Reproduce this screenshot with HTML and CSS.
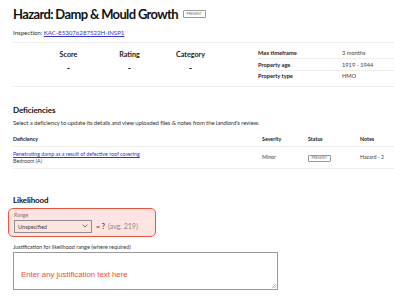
FILE: index.html
```html
<!DOCTYPE html>
<html>
<head>
<meta charset="utf-8">
<link rel="stylesheet" href="styles.css">
</head>
<body>
<div class="page">
  <div class="title-row">
    <h1 class="title">Hazard: Damp &amp; Mould Growth</h1>
    <span class="badge">PRESENT</span>
  </div>
  <div class="inspection">Inspection: <a href="#">KAC-853076287522H-INSP1</a></div>
  <hr class="rule rule-top">
  <div class="summary">
    <div class="scores">
      <div class="score"><div class="score-label">Score</div><div class="score-val">-</div></div>
      <div class="score"><div class="score-label">Rating</div><div class="score-val">-</div></div>
      <div class="score"><div class="score-label">Category</div><div class="score-val">-</div></div>
    </div>
    <table class="props">
      <tr><th>Max timeframe</th><td>3 months</td></tr>
      <tr><th>Property age</th><td>1919 - 1944</td></tr>
      <tr><th>Property type</th><td>HMO</td></tr>
    </table>
  </div>
  <hr class="rule">
  <h2 class="section">Deficiencies</h2>
  <p class="desc">Select a deficiency to update its details and view uploaded files &amp; notes from the landlord's review.</p>
  <table class="defs">
    <thead>
      <tr><th class="c-def">Deficiency</th><th class="c-sev">Severity</th><th class="c-st">Status</th><th class="c-notes">Notes</th></tr>
    </thead>
    <tbody>
      <tr>
        <td class="c-def"><a href="#">Penetrating damp as a result of defective roof covering</a><div class="room">Bedroom (A)</div></td>
        <td class="c-sev">Minor</td>
        <td class="c-st"><span class="badge">PRESENT</span></td>
        <td class="c-notes">Hazard - 2</td>
      </tr>
    </tbody>
  </table>
  <h2 class="section lik">Likelihood</h2>
  <div class="range-box">
    <div class="range-label">Range</div>
    <div class="range-row">
      <div class="select">Unspecified<svg class="chev" width="6" height="4" viewBox="0 0 6 4"><path d="M0.5 0.5 L3 3 L5.5 0.5" fill="none" stroke="#555" stroke-width="0.8"/></svg></div>
      <span class="eq">= ?</span><span class="avg">(avg. 219)</span>
    </div>
  </div>
  <div class="just-label">Justification for likelihood range (where required)</div>
  <div class="textarea"><span class="ph">Enter any justification text here</span><svg class="grip" width="5" height="5" viewBox="0 0 5 5"><path d="M1 5 L5 1 M3 5 L5 3" stroke="#888" stroke-width="0.6"/></svg></div>
</div>
</body>
</html>
```

FILE: styles.css
```css
* { box-sizing: border-box; }
html, body { margin: 0; padding: 0; background: #fff; }
body { font-family: Lato, "Noto Sans", sans-serif; color: #222; }
.page { padding: 5px 0 0 13px; width: 394px; }
.title-row { display: flex; align-items: center; gap: 5px; height: 18px; }
.title { font-size: 13px; font-weight: 700; margin: 0; color: #111; line-height: 18px; letter-spacing: -0.65px; }
.badge { display: inline-block; border: 1px solid #999; font-size: 3.4px; line-height: 4.5px; padding: 0.5px 2.5px; color: #666; letter-spacing: 0.15px; border-radius: 1px; }
.inspection { font-size: 6.2px; margin-top: 5px; color: #333; line-height: 10px; letter-spacing: -0.05px; }
.inspection a { color: #3434d6; }
.rule { border: 0; border-top: 1px solid #eee; margin: 0; }
.rule-top { margin-top: 4px; }
.summary { display: flex; height: 43px; }
.scores { display: flex; width: 232px; padding-left: 25px; padding-top: 7px; }
.score { width: 61px; text-align: center; }
.score-label { font-size: 7.2px; font-weight: 700; line-height: 10px; color: #222; }
.score-val { font-size: 9px; font-weight: 700; margin-top: 3px; line-height: 10px; }
.props { border-collapse: collapse; margin-left: 13px; margin-top: 4.5px; width: 136px; font-size: 5.7px; align-self: flex-start; }
.props th { text-align: left; font-weight: 700; padding: 1.5px 0; width: 84px; line-height: 7.5px; border-bottom: 1px solid #eee; }
.props td { padding: 1.5px 0; line-height: 7.5px; color: #444; border-bottom: 1px solid #eee; }
.props tr:last-child th, .props tr:last-child td { border-bottom: 0; }
.section { font-size: 8px; font-weight: 700; margin: 17px 0 0 0; line-height: 12px; color: #111; letter-spacing: -0.1px; }
.desc { font-size: 6px; margin: 2px 0 0 0; line-height: 9px; color: #333; letter-spacing: -0.12px; }
.defs { border-collapse: collapse; width: 381px; margin-top: 7px; font-size: 5.3px; }
.defs th { text-align: left; font-weight: 700; padding: 2px 0 3px 0; line-height: 7px; border-bottom: 1px solid #eee; color: #222; }
.defs td { padding: 3.5px 0 2.5px 0; line-height: 7.5px; border-bottom: 1px solid #eee; vertical-align: middle; color: #444; }
.c-def { width: 249px; }
.c-sev { width: 46px; }
.c-st { width: 52px; }
.defs a { color: #3434d6; }
.room { color: #444; }
.lik { margin-top: 25px; letter-spacing: -0.15px; }
.range-box { margin: 2px 0 0 -5px; width: 148px; background: #fde4e2; border: 1.5px solid #e9553f; border-radius: 5px; padding: 3px 0 3.5px 5px; }
.range-label { font-size: 5.3px; color: #777; line-height: 7px; }
.range-row { display: flex; align-items: center; margin-top: 0.5px; }
.select { width: 78px; height: 13px; border: 1px solid #8e8e8e; background: #fde4e2; font-size: 5.6px; color: #444; display: flex; align-items: center; justify-content: space-between; padding: 0 3px 0 3px; }
.eq { font-size: 7px; font-weight: 700; margin-left: 4px; color: #444; }
.avg { font-size: 7px; color: #888; margin-left: 3px; }
.just-label { font-size: 5.5px; margin-top: 6px; line-height: 8px; color: #333; }
.textarea { position: relative; width: 265px; height: 38px; border: 1.5px solid #999; margin-top: 1px; padding: 13px 0 0 7px; line-height: 9px; }
.ph { font-family: "Liberation Sans", Arial, sans-serif; font-size: 7.8px; color: #ef4b33; }
.grip { position: absolute; right: 1px; bottom: 1px; }
```
